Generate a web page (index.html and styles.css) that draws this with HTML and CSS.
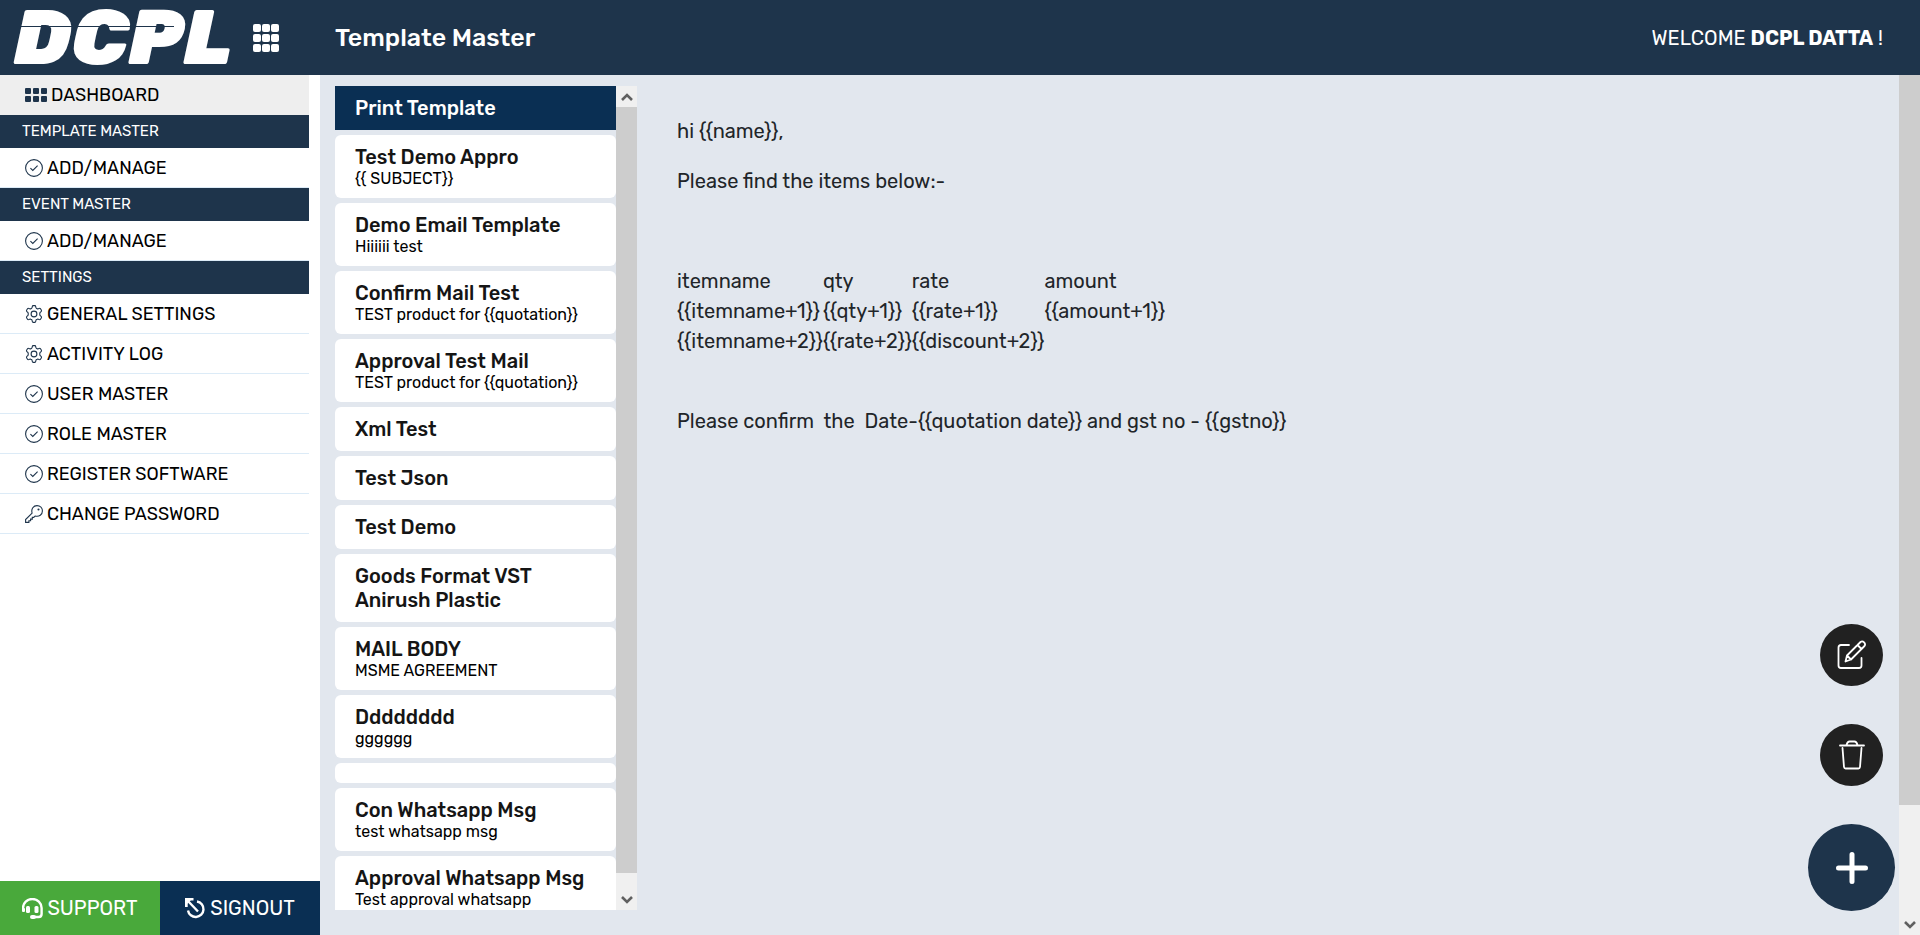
FILE: index.html
```html
<!DOCTYPE html>
<html lang="en">
<head>
    <meta charset="UTF-8">
    <meta name="viewport" content="width=device-width, initial-scale=1.0">
    <title>Template Master</title>
    <link rel="stylesheet" href="styles.css">
</head>
<body>
    <!-- shared icons -->
    <svg class="sprite" aria-hidden="true">
        <symbol id="check" viewBox="0 0 18 18">
            <circle cx="9" cy="9" r="8.4"/>
            <path d="M5.4 9.2l2.4 2.3 4.8-4.8"/>
        </symbol>
        <symbol id="gear" viewBox="0 0 18 18">
            <circle cx="9" cy="9" r="2.9"/>
            <path d="M7.3 1.6Q7.4.6 8.2.6h1.6q.8 0 .9 1l.2.9q.1.6.7.9l.6.3q.5.3 1.1.1l.9-.4q.9-.3 1.3.4l.9 1.5q.4.7-.3 1.3l-.8.7q-.5.4-.5 1v1.4q0 .6.5 1l.8.7q.7.6.3 1.3l-.9 1.5q-.4.7-1.3.4l-.9-.4q-.6-.2-1.1.1l-.6.3q-.6.3-.7.9l-.2.9q-.1 1-.9 1H8.2q-.8 0-.9-1l-.2-.9q-.1-.6-.7-.9l-.6-.3q-.5-.3-1.1-.1l-.9.4q-.9.3-1.3-.4l-.9-1.5q-.4-.7.3-1.3l.8-.7q.5-.4.5-1V8.300q0-.6-.5-1l-.8-.7q-.7-.6-.3-1.3l.9-1.500q.4-.7 1.300-.4l.9.4q.6.2 1.100-.1l.6-.3q.6-.3.700-.9z"/>
        </symbol>
        <symbol id="key" viewBox="0 0 18 18">
            <path d="M7.100 8.200C5.900 3.900 8.500.6 12 .6c3.200 0 5.400 2.400 5.400 5.400 0 3.700-3.200 6-7.300 5l-1.300 1.400H7.300v1.700H5.600v1.700H3.900v1.600H.6v-2.800z"/>
            <circle cx="13.500" cy="4.500" r=".5"/>
        </symbol>
        <symbol id="up" viewBox="0 0 12 8">
            <path d="M1 7l5-5 5 5"/>
        </symbol>
        <symbol id="down" viewBox="0 0 12 8">
            <path d="M1 1l5 5 5-5"/>
        </symbol>
    </svg>

    <header class="topbar">
        <a class="logo" href="#">DCPL</a>
        <button class="menu" aria-label="Toggle menu">
            <svg width="26" height="28" viewBox="0 0 26 28">
                <rect x="0" y="0" width="8" height="8" rx="2"/><rect x="9" y="0" width="8" height="8" rx="2"/><rect x="18" y="0" width="8" height="8" rx="2"/>
                <rect x="0" y="10" width="8" height="8" rx="2"/><rect x="9" y="10" width="8" height="8" rx="2"/><rect x="18" y="10" width="8" height="8" rx="2"/>
                <rect x="0" y="20" width="8" height="8" rx="2"/><rect x="9" y="20" width="8" height="8" rx="2"/><rect x="18" y="20" width="8" height="8" rx="2"/>
            </svg>
        </button>
        <h1>Template Master</h1>
        <p class="welcome">WELCOME <b>DCPL DATTA</b> !</p>
    </header>

    <div class="page">
        <aside class="sidebar">
            <nav>
                <a class="item dashboard" href="#">
                    <svg width="22" height="14" viewBox="0 0 22 14">
                        <rect x="0" y="0" width="6" height="6" rx="1"/><rect x="8" y="0" width="6" height="6" rx="1"/><rect x="16" y="0" width="6" height="6" rx="1"/>
                        <rect x="0" y="8" width="6" height="6" rx="1"/><rect x="8" y="8" width="6" height="6" rx="1"/><rect x="16" y="8" width="6" height="6" rx="1"/>
                    </svg>
                    DASHBOARD
                </a>
                <h2>TEMPLATE MASTER</h2>
                <a class="item" href="#"><svg class="icon"><use href="#check"/></svg>ADD/MANAGE</a>
                <h2>EVENT MASTER</h2>
                <a class="item" href="#"><svg class="icon"><use href="#check"/></svg>ADD/MANAGE</a>
                <h2>SETTINGS</h2>
                <a class="item" href="#"><svg class="icon"><use href="#gear"/></svg>GENERAL SETTINGS</a>
                <a class="item" href="#"><svg class="icon"><use href="#gear"/></svg>ACTIVITY LOG</a>
                <a class="item" href="#"><svg class="icon"><use href="#check"/></svg>USER MASTER</a>
                <a class="item" href="#"><svg class="icon"><use href="#check"/></svg>ROLE MASTER</a>
                <a class="item" href="#"><svg class="icon"><use href="#check"/></svg>REGISTER SOFTWARE</a>
                <a class="item" href="#"><svg class="icon"><use href="#key"/></svg>CHANGE PASSWORD</a>
            </nav>
            <div class="bottom">
                <a class="support" href="#">
                    <svg width="21" height="21" viewBox="0 0 21 21">
                        <path class="line" d="M1 13V10a9.300 9 0 0 1 18.600 0v6q0 3-3 3h-4"/>
                        <rect x="4" y="8" width="4" height="7" rx="1.500"/>
                        <rect x="12.500" y="8" width="4" height="7" rx="1.500"/>
                        <rect x="0" y="10" width="3" height="4" rx="1"/>
                        <rect x="8" y="17" width="6" height="4" rx="2"/>
                    </svg>
                    SUPPORT
                </a>
                <a class="signout" href="#">
                    <svg width="21" height="21" viewBox="0 0 21 21">
                        <path class="line" d="M2 2l11 11.500M12 3.500a7.800 7.800 0 1 1-9 9"/>
                        <path d="M0 0h8.500v2.600H2.700v6.300H0z"/>
                        <path d="M1 1h6L1 7z"/>
                    </svg>
                    SIGNOUT
                </a>
            </div>
        </aside>

        <main>
            <section class="list">
                <div class="cards">
                    <a class="card active" href="#"><h3>Print Template</h3></a>
                    <a class="card" href="#"><h3>Test Demo Appro</h3><p>{{ SUBJECT}}</p></a>
                    <a class="card" href="#"><h3>Demo Email Template</h3><p>Hiiiiii test</p></a>
                    <a class="card" href="#"><h3>Confirm Mail Test</h3><p>TEST product for {{quotation}}</p></a>
                    <a class="card" href="#"><h3>Approval Test Mail</h3><p>TEST product for {{quotation}}</p></a>
                    <a class="card" href="#"><h3>Xml Test</h3></a>
                    <a class="card" href="#"><h3>Test Json</h3></a>
                    <a class="card" href="#"><h3>Test Demo</h3></a>
                    <a class="card" href="#"><h3>Goods Format VST Anirush Plastic</h3></a>
                    <a class="card" href="#"><h3>MAIL BODY</h3><p>MSME AGREEMENT</p></a>
                    <a class="card" href="#"><h3>Dddddddd</h3><p>gggggg</p></a>
                    <a class="card" href="#" aria-label="Untitled"></a>
                    <a class="card" href="#"><h3>Con Whatsapp Msg</h3><p>test whatsapp msg</p></a>
                    <a class="card" href="#"><h3>Approval Whatsapp Msg</h3><p>Test approval whatsapp</p></a>
                </div>
                <div class="scroll list-scroll" aria-hidden="true">
                    <span class="arrow"><svg><use href="#up"/></svg></span>
                    <span class="track"><i class="thumb"></i></span>
                    <span class="arrow"><svg><use href="#down"/></svg></span>
                </div>
            </section>

            <article class="preview">
                <p>hi {{name}},</p>
                <p>Please find the items below:-</p>
                <p>&nbsp;</p>
                <table>
                    <tr><td>itemname</td><td>qty</td><td>rate</td><td>amount</td></tr>
                    <tr><td>{{itemname+1}}</td><td>{{qty+1}}</td><td>{{rate+1}}</td><td>{{amount+1}}</td></tr>
                    <tr><td>{{itemname+2}}</td><td>{{rate+2}}</td><td>{{discount+2}}</td><td></td></tr>
                </table>
                <p>&nbsp;</p>
                <p>Please confirm&nbsp; the&nbsp; Date-{{quotation date}} and gst no - {{gstno}}</p>
            </article>

            <div class="actions">
                <button aria-label="Edit">
                    <svg width="30" height="30" viewBox="0 0 30 30">
                        <path d="M12 5H4q-2.500 0-2.500 2.500v18Q1.500 28 4 28h18q2.500 0 2.500-2.500V18"/>
                        <path d="M8.500 21.500l1.500-6L23.500 2q1.800-1.300 3.600.4 1.700 1.800.4 3.600L14 19.500zM10 15.500l4 4M20.500 5l4 4"/>
                    </svg>
                </button>
                <button aria-label="Delete">
                    <svg width="26" height="30" viewBox="0 0 26 30">
                        <path d="M1 5.500h24M7.500 5q1-3.500 3-3.500h5q2 0 3 3.500M3.500 8l1.500 19q.2 1.500 1.600 1.500h12.800q1.400 0 1.600-1.500L22.500 8"/>
                    </svg>
                </button>
                <button class="add" aria-label="Add">
                    <svg width="32" height="32" viewBox="0 0 32 32">
                        <path d="M16 2.500v27M2.500 16h27"/>
                    </svg>
                </button>
            </div>
        </main>

        <div class="scroll page-scroll" aria-hidden="true">
            <span class="track"><i class="thumb"></i></span>
            <span class="arrow"><svg><use href="#down"/></svg></span>
        </div>
    </div>
</body>
</html>
```

FILE: styles.css
```css
:root{
    --navy: #1e344b;
    --blue: #0a2f53;
    --green: #49a93b;
    --bg: #e2e7ee;
}

*{
    margin: 0;
    padding: 0;
    box-sizing: border-box;
}

body{
    height: 100vh;
    display: flex;
    flex-direction: column;
    background-color: var(--bg);
    color: black;
    font-family: Rubik, Roboto, sans-serif;
    font-size: 18px;
}

a{
    color: inherit;
    text-decoration: none;
}

button{
    border: none;
    cursor: pointer;
}

svg{
    display: block;
    flex-shrink: 0;
}

.sprite{
    position: absolute;
    width: 0;
    height: 0;
}

/* top bar */
.topbar{
    height: 75px;
    flex-shrink: 0;
    display: flex;
    align-items: center;
    padding-right: 37px;
    background-color: var(--navy);
    color: white;
}

.logo{
    position: relative;
    width: 253px;
    padding-left: 14px;
    font-size: 78px;
    font-weight: 900;
    font-style: italic;
    line-height: 75px;
}

/* thin cut through the letters */
.logo::after{
    content: "";
    position: absolute;
    left: 14px;
    top: 26px;
    width: 160px;
    height: 1px;
    background-color: var(--navy);
}

.menu{
    width: 82px;
    background: none;
}

.menu svg{
    fill: white;
}

.topbar h1{
    font-size: 25px;
    font-weight: 500;
}

.welcome{
    margin-left: auto;
    font-size: 20px;
}

/* sidebar */
.page{
    flex: 1;
    min-height: 0;
    display: flex;
}

.sidebar{
    width: 320px;
    flex-shrink: 0;
    display: flex;
    flex-direction: column;
    background-color: white;
}

nav{
    flex: 1;
    margin-right: 11px;
}

nav h2{
    height: 33px;
    padding-left: 22px;
    background-color: var(--navy);
    color: white;
    font-size: 15px;
    font-weight: 400;
    line-height: 33px;
}

.item{
    height: 40px;
    display: flex;
    align-items: center;
    gap: 4px;
    padding-left: 25px;
    border-bottom: 1px solid #dcebf7;
}

.dashboard{
    background-color: #eeeeee;
    border-bottom: none;
}

.dashboard svg{
    fill: var(--navy);
}

.icon{
    width: 18px;
    height: 18px;
    fill: none;
    stroke: var(--navy);
    stroke-width: 1.1;
}

.bottom{
    display: flex;
    height: 54px;
    color: white;
    font-size: 20px;
}

.bottom a{
    flex: 1;
    display: flex;
    align-items: center;
    justify-content: center;
    gap: 4px;
}

.bottom svg{
    fill: white;
}

.bottom .line{
    fill: none;
    stroke: white;
    stroke-width: 2.4;
}

.support{
    background-color: var(--green);
}

.signout{
    background-color: var(--blue);
}

/* template list */
main{
    position: relative;
    flex: 1;
    display: flex;
    padding: 11px 0 25px 15px;
}

.list{
    display: flex;
    width: 302px;
    flex-shrink: 0;
}

.cards{
    flex: 1;
    display: flex;
    flex-direction: column;
    gap: 5px;
    overflow: hidden;
}

.card{
    flex-shrink: 0;
    padding: 10px 20px;
    border-radius: 6px;
    background-color: white;
}

.card h3{
    color: #151515;
    font-size: 20px;
    font-weight: 500;
    line-height: 24px;
}

.card p{
    font-size: 16px;
    line-height: 19px;
}

.active{
    border-radius: 0;
    background-color: var(--blue);
}

.active h3{
    color: white;
}

/* scrollbars */
.scroll{
    width: 21px;
    flex-shrink: 0;
    display: flex;
    flex-direction: column;
    background-color: #f0f0f0;
}

.arrow{
    height: 21px;
    display: flex;
    align-items: center;
    justify-content: center;
}

.arrow svg{
    width: 12px;
    height: 8px;
    fill: none;
    stroke: #606060;
    stroke-width: 2.6;
}

.track{
    flex: 1;
}

.thumb{
    display: block;
    background-color: #cdcdcd;
}

.list-scroll .thumb{
    height: 98%;
}

.page-scroll .thumb{
    height: 87%;
}

/* preview */
.preview{
    padding: 30px 40px;
    color: #212529;
    font-size: 20px;
    line-height: 30px;
}

.preview p{
    margin-bottom: 20px;
}

.preview table{
    width: 488px;
    border-collapse: collapse;
    white-space: nowrap;
}

/* floating buttons */
.actions{
    position: absolute;
    right: 4px;
    bottom: 24px;
    display: flex;
    flex-direction: column;
    align-items: center;
    gap: 38px;
}

.actions button{
    width: 63px;
    height: 62px;
    display: flex;
    align-items: center;
    justify-content: center;
    border-radius: 50%;
    background-color: #212121;
}

.actions svg{
    fill: none;
    stroke: white;
    stroke-width: 1.8;
    stroke-linecap: round;
    stroke-linejoin: round;
}

.actions .add{
    width: 87px;
    height: 87px;
    background-color: var(--navy);
}

.actions .add svg{
    stroke-width: 5;
}
```
